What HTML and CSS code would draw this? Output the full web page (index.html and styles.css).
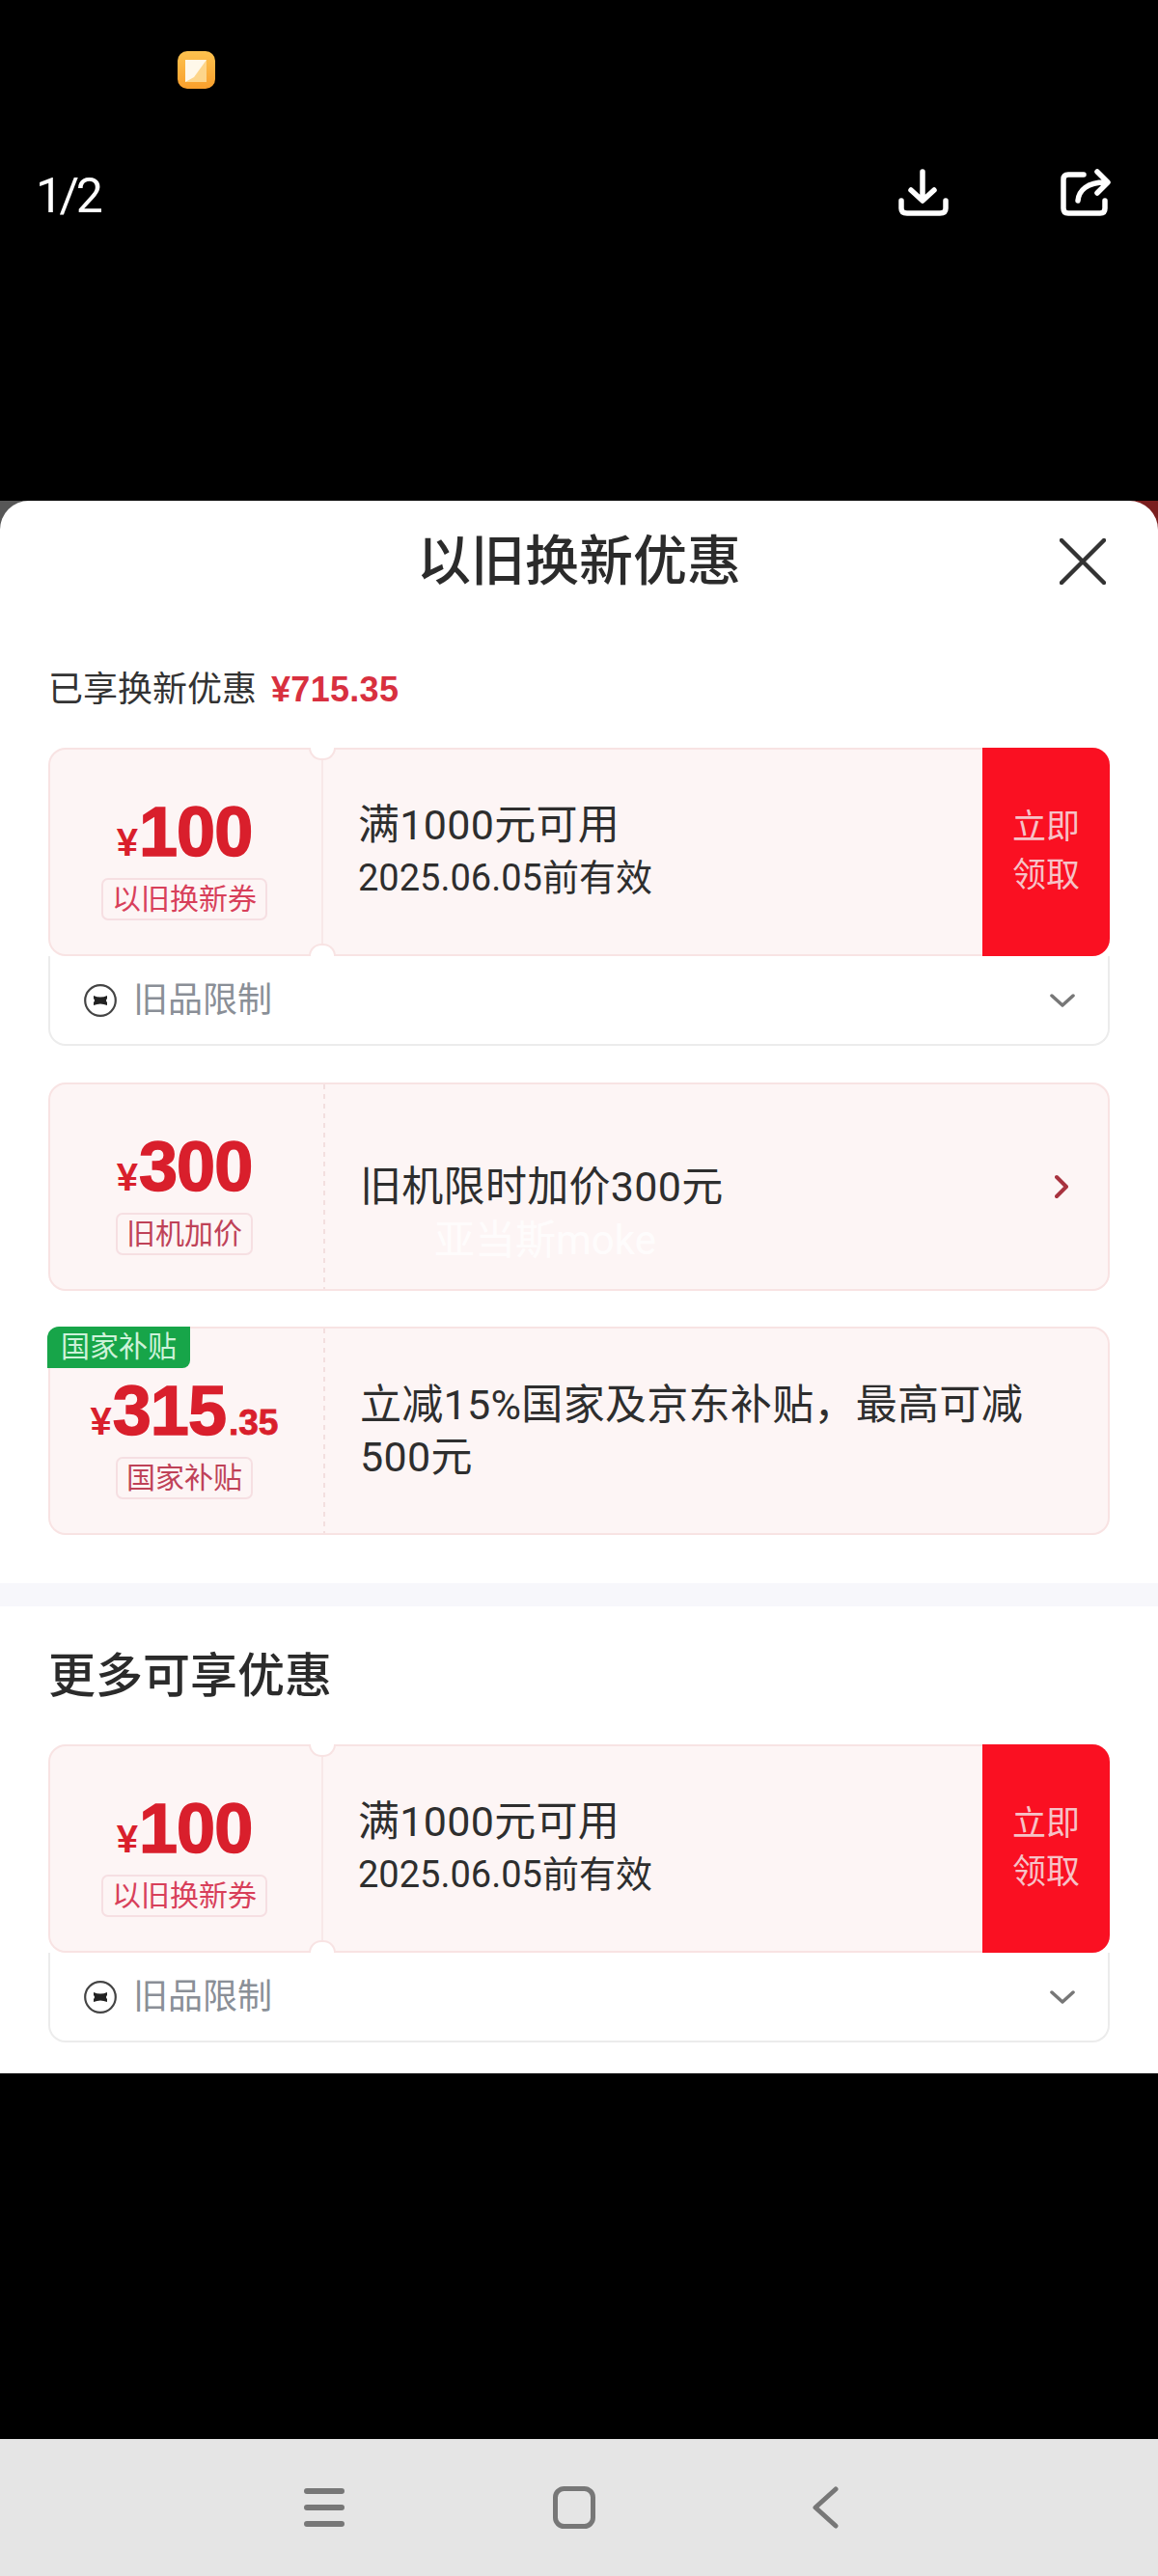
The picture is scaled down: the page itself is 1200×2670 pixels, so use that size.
FILE: index.html
```html
<!DOCTYPE html>
<html lang="zh-CN">
<head>
<meta charset="utf-8">
<title>以旧换新优惠</title>
<link rel="stylesheet" href="styles.css">
</head>
<body>
<div class="page">
  <header class="top">
    <div class="status">
      <svg class="app-icon" width="39" height="39" viewBox="0 0 39 39">
        <defs><linearGradient id="appg" x1="0" y1="0" x2="0" y2="1"><stop offset="0" stop-color="#fdc24f"/><stop offset="1" stop-color="#f99f2c"/></linearGradient></defs>
        <rect width="39" height="39" rx="10" fill="url(#appg)"/>
        <rect x="8" y="9" width="22" height="23" fill="#fdd58a"/>
        <path d="M8 9H30L17 27 8 32Z" fill="#fff8ea"/>
      </svg>
    </div>
    <div class="toolbar">
      <span class="pager">1/2</span>
      <div class="tools">
        <svg class="tool" width="52" height="50" viewBox="0 0 52 50"><path d="M25 3V32M13 22 25 33 37 22M3 33V41Q3 46 9 46H43Q49 46 49 41V33"/></svg>
        <svg class="tool" width="52" height="50" viewBox="0 0 52 50"><path d="M24 6H8Q3 6 3 11V41Q3 46 8 46H41Q46 46 46 41V33M18 33C19 22 28 14 46 14M38 3 49 14 38 25"/></svg>
      </div>
    </div>
  </header>

  <div class="sheet-back">
    <main class="sheet">
      <div class="sheet-head">
        <span></span>
        <h1 class="sheet-title">以旧换新优惠</h1>
        <svg class="close" width="48" height="48" viewBox="0 0 48 48"><path d="M2 2 46 46M46 2 2 46"/></svg>
      </div>

      <section class="group">
        <p class="saved">已享换新优惠<b class="saved-price">¥715.35</b></p>

        <article class="coupon">
          <div class="ticket">
            <div class="value">
              <div class="amount"><span class="yen">¥</span><span class="digits">100</span></div>
              <span class="tag">以旧换新券</span>
            </div>
            <div class="notched"><i class="notch notch-top"></i><i class="notch notch-bottom"></i></div>
            <div class="info">
              <div><p class="line">满1000元可用</p><p class="line line-small">2025.06.05前有效</p></div>
            </div>
            <button class="claim">立即<br>领取</button>
          </div>
          <div class="foot">
            <svg class="foot-icon" width="34" height="34" viewBox="0 0 34 34"><circle cx="17" cy="17" r="15.8"/><path class="foot-mark" d="M10 12Q17 15 24 12V15Q22 17 24 19V22Q17 19 10 22V19Q12 17 10 15Z"/></svg>
            <span class="foot-text">旧品限制</span>
            <svg class="foot-arrow" width="26" height="16" viewBox="0 0 26 16"><path d="M2 3 13 13 24 3"/></svg>
          </div>
        </article>

        <article class="plain">
          <div class="value">
            <div class="amount"><span class="yen">¥</span><span class="digits">300</span></div>
            <span class="tag tag-dark">旧机加价</span>
          </div>
          <div class="dashed"></div>
          <div class="info info-link">
            <p class="line">旧机限时加价300元</p>
            <svg class="go" width="14" height="26" viewBox="0 0 14 26"><path d="M2 3 12 13 2 23"/></svg>
          </div>
          <span class="watermark">亚当斯moke</span>
        </article>

        <article class="plain">
          <span class="flag">国家补贴</span>
          <div class="value">
            <div class="amount"><span class="yen">¥</span><span class="digits">315</span><span class="cents">.35</span></div>
            <span class="tag tag-dark">国家补贴</span>
          </div>
          <div class="dashed"></div>
          <div class="info">
            <p class="line line-wrap">立减15%国家及京东补贴，最高可减500元</p>
          </div>
        </article>
      </section>

      <div class="band"></div>

      <section class="group group-more">
        <h2 class="more-title">更多可享优惠</h2>
        <article class="coupon">
          <div class="ticket">
            <div class="value">
              <div class="amount"><span class="yen">¥</span><span class="digits">100</span></div>
              <span class="tag">以旧换新券</span>
            </div>
            <div class="notched"><i class="notch notch-top"></i><i class="notch notch-bottom"></i></div>
            <div class="info">
              <div><p class="line">满1000元可用</p><p class="line line-small">2025.06.05前有效</p></div>
            </div>
            <button class="claim">立即<br>领取</button>
          </div>
          <div class="foot">
            <svg class="foot-icon" width="34" height="34" viewBox="0 0 34 34"><circle cx="17" cy="17" r="15.8"/><path class="foot-mark" d="M10 12Q17 15 24 12V15Q22 17 24 19V22Q17 19 10 22V19Q12 17 10 15Z"/></svg>
            <span class="foot-text">旧品限制</span>
            <svg class="foot-arrow" width="26" height="16" viewBox="0 0 26 16"><path d="M2 3 13 13 24 3"/></svg>
          </div>
        </article>
      </section>
    </main>
  </div>

  <div class="filler"></div>

  <nav class="navbar">
    <svg class="nav-menu" width="42" height="40" viewBox="0 0 42 40"><path d="M3 3H39M3 20H39M3 37H39"/></svg>
    <svg class="nav-home" width="44" height="44" viewBox="0 0 44 44"><rect x="2.5" y="2.5" width="39" height="39" rx="9"/></svg>
    <svg class="nav-back" width="28" height="44" viewBox="0 0 28 44"><path d="M25 3 4 22 25 41"/></svg>
  </nav>
</div>
</body>
</html>
```

FILE: styles.css
```css
* { box-sizing: border-box; }
html, body { margin: 0; padding: 0; background: #000; }
body { font-family: Roboto, "Noto Sans CJK SC", sans-serif; color: #2f2f2f; }
p, h1, h2 { margin: 0; }

.page { width: 1200px; height: 2670px; display: flex; flex-direction: column; background: #000; }

.top { height: 519px; flex: none; }
.status { padding: 53px 0 0 184px; height: 92px; }
.app-icon { display: block; }
.toolbar { display: flex; align-items: center; justify-content: space-between; height: 50px; margin-top: 83px; padding: 0 49px 0 37px; }
.pager { color: #fff; font-size: 50px; font-weight: 400; letter-spacing: -3.5px; line-height: 50px; padding-top: 6px; }
.tools { display: flex; gap: 116px; }
.tool { display: block; fill: none; stroke: #fff; stroke-width: 5.5; stroke-linecap: round; stroke-linejoin: round; }

.sheet-back { background: linear-gradient(to right, #575757 50%, #7a1e1e 50%); }
.sheet { background: #fff; border-radius: 30px 30px 0 0; padding-bottom: 32px; }
.sheet-head { display: grid; grid-template-columns: 1fr auto 1fr; align-items: center; height: 124px; padding: 1px 54px 0; }
.sheet-title { font-size: 56px; font-weight: 500; line-height: 60px; color: #2b2b2b; }
.close { justify-self: end; fill: none; stroke: #333; stroke-width: 4.5; stroke-linecap: round; }

.group { padding: 0 50px; display: flex; flex-direction: column; }
.saved { font-size: 36px; line-height: 50px; margin-top: 47px; margin-bottom: 35px; color: #333; }
.saved-price { margin-left: 15px; color: #d8303f; font-weight: 700; letter-spacing: 0.3px; font-family: "Liberation Sans", "Noto Sans CJK SC", sans-serif; }

.coupon { margin-bottom: 38px; }
.ticket { display: flex; height: 216px; background: #fdf5f5; border: 2px solid #f8e3e3; border-radius: 18px; position: relative; z-index: 1; }
.value { width: 281px; flex: none; display: flex; flex-direction: column; align-items: center; padding: 49px 3px 0 0; }
.amount { display: flex; align-items: baseline; height: 72px; line-height: 72px; color: #d91f2c; font-family: "Liberation Sans", sans-serif; font-weight: 700; }
.yen { font-size: 40px; margin-right: 1px; }
.digits { font-size: 72px; letter-spacing: -1px; -webkit-text-stroke: 1.5px #d91f2c; }
.cents { font-size: 37px; margin-left: 3px; letter-spacing: 0; -webkit-text-stroke: 0.8px #d91f2c; }
.tag { height: 44px; margin-top: 12px; padding: 0 9px; line-height: 40px; font-size: 30px; color: #d8405a; border: 2px solid #f6dfe2; border-radius: 7px; }
.tag-dark { color: #bf4258; }

.notched { width: 2px; flex: none; background: #f8e8e8; position: relative; }
.notch { position: absolute; left: -13px; width: 28px; height: 13px; background: #fff; border: 2px solid #f8e3e3; }
.notch-top { top: -2px; border-top: none; border-radius: 0 0 14px 14px; }
.notch-bottom { bottom: -2px; border-bottom: none; border-radius: 14px 14px 0 0; }

.info { flex: 1; display: flex; align-items: center; padding-left: 36px; }
.info-link { justify-content: space-between; padding-right: 41px; }
.line { font-size: 43px; line-height: 55px; letter-spacing: 0.3px; color: #2e2e2e; }
.line-small { font-size: 38px; letter-spacing: 0; }
.line-wrap { line-height: 54px; max-width: 700px; }

.claim { width: 132px; flex: none; margin: -2px -2px -2px 0; padding: 0; border: none; background: #fa1022; color: #f6c2c7; font-family: inherit; font-size: 35px; line-height: 50px; border-radius: 0 18px 18px 0; }

.foot { display: flex; align-items: center; height: 93px; padding: 0 34px 0 35px; background: #fff; border: 2px solid #ececec; border-top: none; border-radius: 0 0 18px 18px; }
.foot-icon { flex: none; fill: none; stroke: #444; stroke-width: 2.2; }
.foot-mark { fill: #222; stroke: none; }
.foot-text { margin-left: 17px; font-size: 36px; color: #8a8f97; flex: 1; line-height: 50px; }
.foot-arrow { fill: none; stroke: #777; stroke-width: 3.5; stroke-linecap: round; stroke-linejoin: round; }

.plain { display: flex; height: 216px; position: relative; background: #fdf5f5; border: 2px solid #f8e3e3; border-radius: 18px; margin-bottom: 37px; }
.plain:last-child { margin-bottom: 0; }
.dashed { width: 2px; flex: none; margin-left: 2px; background: repeating-linear-gradient(to bottom, #f3dfdf 0 5px, transparent 5px 10px); }
.go { flex: none; fill: none; stroke: #a8333f; stroke-width: 4; stroke-linecap: round; stroke-linejoin: round; }
.watermark { position: absolute; left: 398px; top: 137px; font-size: 42px; line-height: 50px; color: rgba(255, 255, 255, 0.8); }
.flag { position: absolute; left: -3px; top: -2px; width: 148px; height: 43px; text-align: center; line-height: 42px; font-size: 30px; color: #cdf2d9; background: #17a549; border-radius: 12px 0 8px 0; }

.band { height: 24px; margin-top: 50px; background: #f7f7fb; }
.group-more { padding-top: 43px; }
.more-title { font-size: 49px; font-weight: 500; line-height: 60px; margin-bottom: 40px; color: #2b2b2b; }
.group-more .coupon { margin-bottom: 0; }

.filler { flex: 1; }

.navbar { height: 142px; flex: none; background: #e5e5e5; display: flex; align-items: center; padding-left: 315px; }
.navbar svg { display: block; fill: none; stroke: #777; stroke-linecap: round; stroke-linejoin: round; }
.nav-menu { stroke-width: 6; }
.nav-home { stroke-width: 5; margin-left: 216px; }
.nav-back { stroke-width: 5; margin-left: 224px; }
```
